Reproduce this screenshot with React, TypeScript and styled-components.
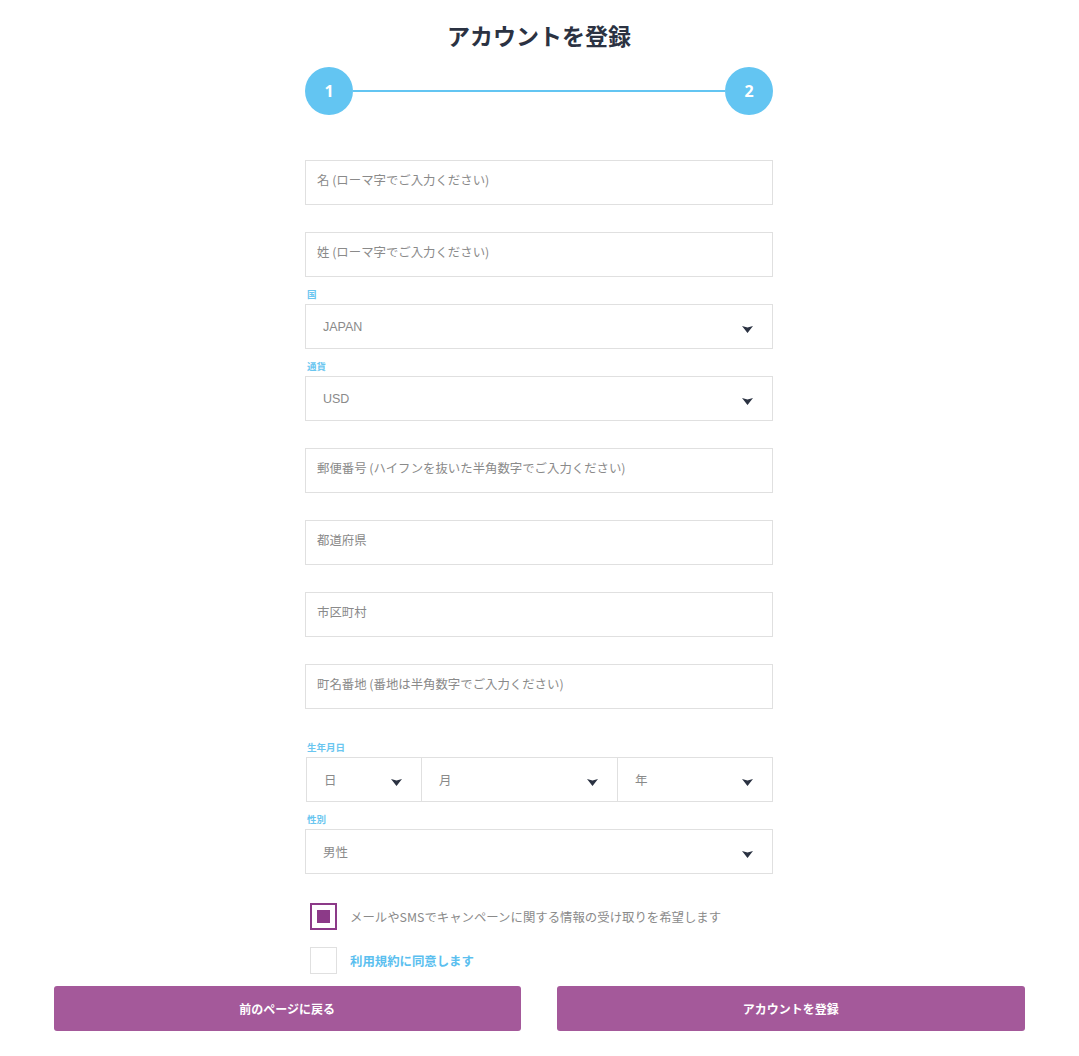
import React from 'react'
import styled, { createGlobalStyle } from 'styled-components'

const GlobalStyle = createGlobalStyle`
  html, body {
    margin: 0;
    padding: 0;
    background: #fff;
  }
  body {
    font-family: "Noto Sans CJK JP", "Open Sans", sans-serif;
  }
`

const Page = styled.div`
  width: 100%;
  box-sizing: border-box;
  display: flex;
  flex-direction: column;
  align-items: center;
  padding: 18px 1px 0 0;
`

const Title = styled.h1`
  margin: 0;
  font-size: 23px;
  line-height: 34px;
  font-weight: 700;
  color: #2b3242;
`

const Stepper = styled.div`
  width: 468px;
  margin-top: 15px;
  display: flex;
  align-items: center;
`

const StepDot = styled.div`
  width: 48px;
  height: 48px;
  border-radius: 50%;
  background: #63c5f2;
  color: #fff;
  font-family: "Open Sans", sans-serif;
  font-weight: 700;
  font-size: 16px;
  display: flex;
  align-items: center;
  justify-content: center;
  flex: none;
`

const StepLine = styled.div`
  flex: 1;
  height: 2px;
  background: #63c5f2;
`

const Form = styled.div`
  width: 468px;
  margin-top: 18px;
  display: flex;
  flex-direction: column;
`

const Field = styled.div<{ $top?: number }>`
  display: flex;
  flex-direction: column;
  padding-top: ${p => (p.$top ?? 27)}px;
`

const Label = styled.div<{ $top?: number }>`
  height: ${p => (p.$top ?? 27)}px;
  margin-top: -${p => (p.$top ?? 27)}px;
  display: flex;
  align-items: flex-end;
  padding: 0 0 3px 2px;
  box-sizing: border-box;
  font-size: 9.5px;
  font-weight: 700;
  color: #6ac6f0;
`

const TextBox = styled.input`
  height: 45px;
  box-sizing: border-box;
  border: 1px solid #e0e0e0;
  border-radius: 0;
  padding: 0 11px 6px;
  font-family: "Noto Sans CJK JP", sans-serif;
  font-size: 12.4px;
  color: #555;
  outline: none;
  &::placeholder {
    color: #8a8a8a;
  }
`

const SelectBox = styled.div<{ $w?: number; $grow?: boolean }>`
  height: 45px;
  box-sizing: border-box;
  border: 1px solid #e0e0e0;
  display: flex;
  align-items: center;
  justify-content: space-between;
  padding: 0 19px 0 17px;
  font-family: "Liberation Sans", "Noto Sans CJK JP", sans-serif;
  font-size: 12.5px;
  color: #8a8a8a;
  ${p => (p.$w ? `width: ${p.$w}px; flex: none;` : '')}
  ${p => (p.$grow ? 'flex: 1;' : '')}
  & + & {
    border-left: none;
  }
`

const Caret = styled.svg`
  width: 11px;
  height: 7px;
  margin-top: 5px;
  flex: none;
`

const DateRow = styled.div`
  display: flex;
  padding-left: 1px;
`

const Checks = styled.div`
  display: flex;
  flex-direction: column;
  gap: 17px;
  margin-top: 29px;
  padding-left: 5px;
`

const CheckRow = styled.label`
  display: flex;
  align-items: center;
  gap: 13px;
  font-size: 12.4px;
`

const Box = styled.span<{ $on?: boolean }>`
  width: 27px;
  height: 27px;
  box-sizing: border-box;
  border: ${p => (p.$on ? '2px solid #8c3a88' : '1px solid #e0e0e0')};
  display: flex;
  align-items: center;
  justify-content: center;
  flex: none;
  &::after {
    content: '';
    display: ${p => (p.$on ? 'block' : 'none')};
    width: 13px;
    height: 13px;
    background: #8c3a88;
  }
`

const CheckText = styled.span<{ $link?: boolean }>`
  color: ${p => (p.$link ? '#5bbfef' : '#8a8a8a')};
  font-weight: ${p => (p.$link ? 700 : 400)};
`

const Buttons = styled.div`
  width: 971px;
  margin-top: 12px;
  display: flex;
  gap: 36px;
`

const Button = styled.button`
  flex: 1;
  height: 45px;
  border: none;
  border-radius: 3px;
  background: #a4599a;
  color: #fff;
  font-family: "Noto Sans CJK JP", sans-serif;
  font-weight: 700;
  font-size: 12px;
  cursor: pointer;
`

const Arrow = () => (
  <Caret viewBox="0 0 11 7">
    <path d="M0 0 L5.5 1.6 L11 0 L5.5 7 Z" fill="#2b3242" />
  </Caret>
)

const Select = ({ value, w, grow }: { value: string; w?: number; grow?: boolean }) => (
  <SelectBox $w={w} $grow={grow}>
    <span>{value}</span>
    <Arrow />
  </SelectBox>
)

export default function App() {
  return (
    <>
      <GlobalStyle />
      <Page>
        <Title>アカウントを登録</Title>
        <Stepper>
          <StepDot>1</StepDot>
          <StepLine />
          <StepDot>2</StepDot>
        </Stepper>
        <Form>
          <Field>
            <TextBox placeholder="名 (ローマ字でご入力ください)" />
          </Field>
          <Field>
            <TextBox placeholder="姓 (ローマ字でご入力ください)" />
          </Field>
          <Field>
            <Label>国</Label>
            <Select value="JAPAN" />
          </Field>
          <Field>
            <Label>通貨</Label>
            <Select value="USD" />
          </Field>
          <Field>
            <TextBox placeholder="郵便番号 (ハイフンを抜いた半角数字でご入力ください)" />
          </Field>
          <Field>
            <TextBox placeholder="都道府県" />
          </Field>
          <Field>
            <TextBox placeholder="市区町村" />
          </Field>
          <Field>
            <TextBox placeholder="町名番地 (番地は半角数字でご入力ください)" />
          </Field>
          <Field $top={48}>
            <Label $top={48}>生年月日</Label>
            <DateRow>
              <Select value="日" w={116} />
              <Select value="月" w={196} />
              <Select value="年" grow />
            </DateRow>
          </Field>
          <Field>
            <Label>性別</Label>
            <Select value="男性" />
          </Field>
          <Checks>
            <CheckRow>
              <Box $on />
              <CheckText>メールやSMSでキャンペーンに関する情報の受け取りを希望します</CheckText>
            </CheckRow>
            <CheckRow>
              <Box />
              <CheckText $link>利用規約に同意します</CheckText>
            </CheckRow>
          </Checks>
        </Form>
        <Buttons>
          <Button>前のページに戻る</Button>
          <Button>アカウントを登録</Button>
        </Buttons>
      </Page>
    </>
  )
}
